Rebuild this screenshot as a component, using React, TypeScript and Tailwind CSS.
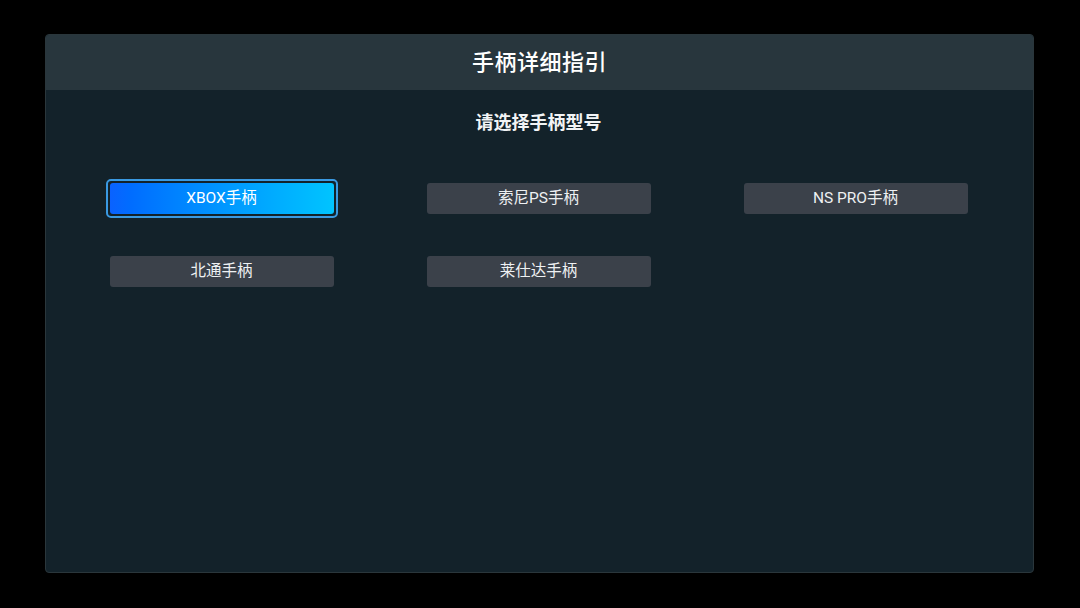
import React from "react";

const items = ["XBOX手柄", "索尼PS手柄", "NS PRO手柄", "北通手柄", "莱仕达手柄"];

export default function App() {
  return (
    <div
      className="w-[1080px] h-[608px] bg-black pt-[34px] pl-[45px]"
      style={{ fontFamily: "Roboto, 'Noto Sans CJK SC', sans-serif" }}
    >
      <div className="w-[989px] h-[539px] rounded-[4px] overflow-hidden bg-[#13222a] border border-[#2a363b] flex flex-col">
        <div className="h-[55px] bg-[#28363d] flex items-center justify-center shrink-0">
          <span className="text-white text-[22px] font-medium leading-none tracking-[0.5px]">手柄详细指引</span>
        </div>
        <div className="flex flex-col items-center pt-[21px] pr-[2px]">
          <div className="text-[#f2f4f5] text-[18px] font-bold leading-[24px]">请选择手柄型号</div>
          <div className="mt-[48px] grid grid-cols-[224px_224px_224px] gap-x-[93px] gap-y-[42px]">
            {items.map((t, i) =>
              i === 0 ? (
                <div key={t} className="relative h-[31px]">
                  <div className="absolute -inset-[4px] rounded-[5px] border-2 border-[#3a9ae2]" />
                  <div className="h-[31px] rounded-[3px] bg-gradient-to-r from-[#0a62ff] to-[#02c4ff] flex items-center justify-center text-white text-[15.5px]">
                    {t}
                  </div>
                </div>
              ) : (
                <div
                  key={t}
                  className="h-[31px] rounded-[3px] bg-[#3b414a] flex items-center justify-center text-[#eef0f2] text-[15.5px]"
                >
                  {t}
                </div>
              )
            )}
          </div>
        </div>
      </div>
    </div>
  );
}
